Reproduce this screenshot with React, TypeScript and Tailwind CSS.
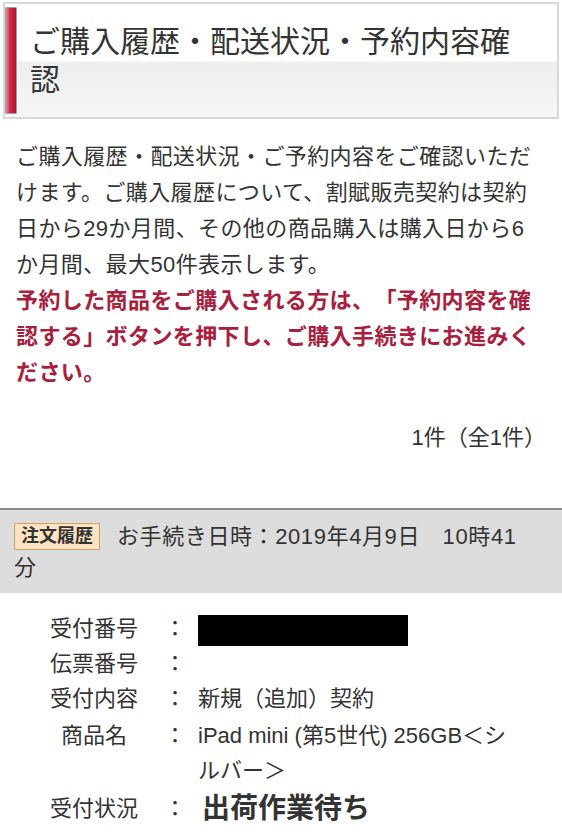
const rows: { label: string; value?: React.ReactNode; kind?: 'masked' | 'status' }[] = [
  { label: '受付番号', kind: 'masked' },
  { label: '伝票番号' },
  { label: '受付内容', value: '新規（追加）契約' },
  {
    label: '商品名',
    value: (
      <>
        iPad mini (第5世代) 256GB＜シ
        <br />
        ルバー＞
      </>
    ),
  },
  { label: '受付状況', value: '出荷作業待ち', kind: 'status' },
];

export default function App() {
  return (
    <div className="min-h-screen bg-white text-[#333] [text-spacing-trim:space-all] font-['Liberation_Sans','Noto_Sans_CJK_JP',sans-serif]">
      {/* Page title */}
      <div className="mx-[3px] mt-[2px] flex border-2 border-[#d8d8d8] bg-[linear-gradient(to_bottom,#ffffff_0%,#ffffff_50%,#eeeeee_52%,#f6f6f6_100%)]">
        <div className="my-[3px] w-[12px] shrink-0 rounded-[1px] border border-[#a0a0a0] bg-[linear-gradient(to_right,#f08a9c_0%,#d43655_35%,#c01c3c_70%,#a8142f_100%)]" />
        <h1 className="pl-[13px] pr-[30px] pt-[19px] pb-[18px] text-[30px] leading-[38px] font-normal text-[#333]">
          ご購入履歴・配送状況・予約内容確
          <br />
          認
        </h1>
      </div>

      {/* Intro */}
      <div className="pl-4 pr-[6px] pt-[20px] text-[22px] leading-[36px] tracking-[0.4px] whitespace-nowrap">
        <p>
          ご購入履歴・配送状況・ご予約内容をご確認いただ
          <br />
          けます。ご購入履歴について、割賦販売契約は契約
          <br />
          日から29か月間、その他の商品購入は購入日から6
          <br />
          か月間、最大50件表示します。
        </p>
        <p className="font-bold text-[#a8203d]">
          予約した商品をご購入される方は、「予約内容を確
          <br />
          認する」ボタンを押下し、ご購入手続きにお進みく
          <br />
          ださい。
        </p>
        <p className="mt-[29px] text-right pr-[10px] tracking-normal">1件（全1件）</p>
      </div>

      {/* Order header */}
      <div className="mt-[52px] border-t-2 border-[#8a8a8a] bg-[#dddddd] px-[14px] pt-[11px] pb-[10px] text-[22px] leading-[31px] tracking-[0.6px]">
        <span className="mr-[17px] inline-block border border-[#d9a066] bg-[#fde3c2] px-[6px] align-[2px] text-[18px] font-bold leading-[25px] tracking-normal">
          注文履歴
        </span>
        お手続き日時：2019年4月9日　10時41
        <br />分
      </div>

      {/* Order details */}
      <div className="flex flex-col pt-[18px] pl-[50px] pr-[6px] text-[22px] leading-[35px]">
        {rows.map((r, i) => (
          <div key={r.label} className={`flex ${i === 3 ? 'mt-[2px]' : ''} ${i === 4 ? 'mt-[3px]' : ''}`}>
            <span className="w-[88px] shrink-0 text-center">{r.label}</span>
            <span className="w-[60px] shrink-0 pl-[26px]">：</span>
            {r.kind === 'masked' ? (
              <span className="mt-[4px] h-[31px] w-[210px] bg-black" />
            ) : r.kind === 'status' ? (
              <span className="-mt-[2px] pl-[4px] text-[28px] font-bold leading-[40px]">{r.value}</span>
            ) : (
              <span className="min-w-0 flex-1 whitespace-nowrap">{r.value}</span>
            )}
          </div>
        ))}
      </div>
    </div>
  );
}
